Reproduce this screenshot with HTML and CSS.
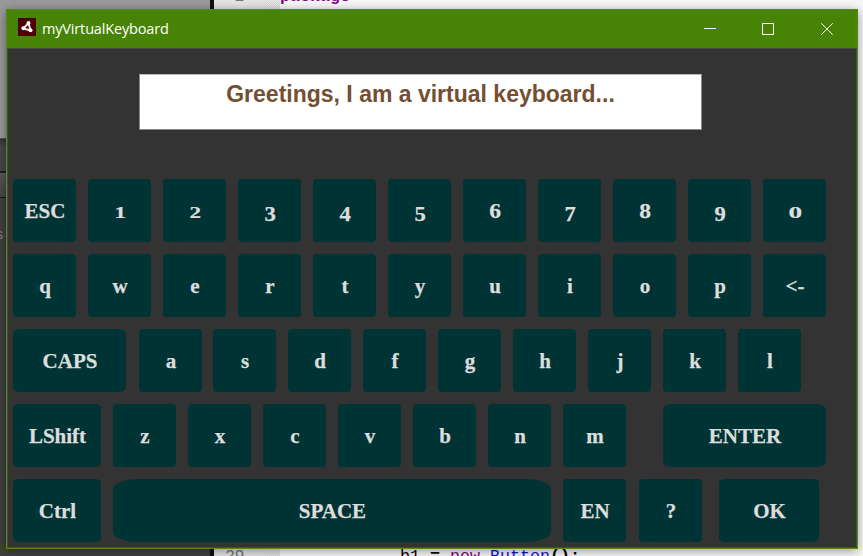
FILE: index.html
```html
<!DOCTYPE html>
<html lang="en">
<head>
<meta charset="utf-8">
<title>myVirtualKeyboard</title>
<link rel="stylesheet" href="styles.css">
</head>
<body>
<div class="desktop">
  <div class="side">
    <div class="side-stage"></div>
    <div class="side-head"></div>
    <div class="side-bar"></div>
    <div class="side-list">s</div>
  </div>
  <div class="divider"></div>
  <div class="editor">
    <div class="line"><span class="num">2</span><span class="fold"></span><code class="code-top"><b class="pkg">package</b></code></div>
    <div class="line"><span class="num">29</span><span class="fold"></span><code class="code-bottom">b1 <b>=</b> <span class="kw">new</span> <span class="type">Button</span><b>();</b></code></div>
  </div>
</div>
<main class="window">
  <header class="titlebar">
    <svg class="logo" viewBox="0 0 18 18"><path fill="#4b0003" d="M0 0h18v18H0z"/><path d="M10.5 5 5.500 10.500M10.500 5l2 7.500M5.500 10.500l7 2" fill="none" stroke="#eee3e3" stroke-width="2"/><g fill="#fff"><circle cx="10.5" cy="5" r="2"/><circle cx="5.4" cy="10.3" r="2"/><circle cx="12.5" cy="12.3" r="2"/></g></svg>
    <h1>myVirtualKeyboard</h1>
    <svg class="controls" viewBox="0 0 130 14" fill="none" stroke="#fff"><path d="M0 6.5h12"/><path d="M58.5 1.5h11v11h-11z"/><path d="m117.300 1.300 11.400 11.400m0-11.400-11.400 11.400"/></svg>
  </header>
  <section class="client">
    <div class="display">Greetings, I am a virtual keyboard...</div>
    <div class="keyboard">
      <div class="row">
        <button>ESC</button><button><span class="small one">1</span></button><button><span class="small">2</span></button><button><span class="low">3</span></button><button><span class="low">4</span></button><button><span class="low">5</span></button><button><span class="tall">6</span></button><button><span class="low">7</span></button><button><span class="tall">8</span></button><button><span class="low">9</span></button><button><span class="small zero">0</span></button>
      </div>
      <div class="row letters">
        <button>q</button><button>w</button><button>e</button><button>r</button><button>t</button><button>y</button><button>u</button><button>i</button><button>o</button><button>p</button><button class="back">&lt;-</button>
      </div>
      <div class="row letters">
        <button class="caps">CAPS</button><button class="key-a">a</button><button>s</button><button>d</button><button>f</button><button>g</button><button>h</button><button>j</button><button>k</button><button>l</button>
      </div>
      <div class="row letters">
        <button class="mod">LShift</button><button>z</button><button>x</button><button>c</button><button>v</button><button>b</button><button>n</button><button>m</button><button class="enter">ENTER</button>
      </div>
      <div class="row">
        <button class="mod">Ctrl</button><button class="space">SPACE</button><button>EN</button><button class="help">?</button><button class="ok">OK</button>
      </div>
    </div>
  </section>
</main>
</body>
</html>
```
FILE: styles.css
```css
* { box-sizing: border-box; }
body { margin: 0; width: 863px; height: 556px; overflow: hidden; }

.desktop { display: grid; grid-template-columns: 210px 4px 1fr; height: 556px; }
.side { display: grid; grid-template-rows: 139px 34px 25px 1fr; background: #414141; }
.side-stage { background: #9a9a9a; border-bottom: 1px solid #555; }
.side-head { background: linear-gradient(#333, #484848 8px); border-bottom: 2px solid #202020; }
.side-bar { background: linear-gradient(#5a5a5a, #444); border-bottom: 1px solid #171717; }
.side-list { padding-top: 28px; margin-left: -4px; font: 14px "Liberation Sans", sans-serif; color: #858585; }
.divider { background: #111; }
.editor { display: flex; flex-direction: column; justify-content: space-between; background: linear-gradient(90deg, #e4e4e4 50px, #f8f8f8 66px); }
.line { display: flex; height: 9px; font: 16.67px/20px "Liberation Mono", monospace; color: #000; white-space: pre; }
.num { width: 50px; padding-right: 20px; text-align: right; letter-spacing: -.5px; color: #777; }
.fold { width: 16px; background: repeating-conic-gradient(#d5d5d5 0 25%, #eee 0 50%) 0 0 / 2px 2px; }
.line code { font: inherit; }
.line:first-child .num, .line:first-child code { margin-top: -13px; }
.pkg { color: #808; }
.code-bottom { margin-left: 120px; }
.kw { color: #808; }
.type { color: #11d; }

.window { position: absolute; left: 6px; top: 9px; width: 852px; height: 540px; border: 1px solid #528b18; background: #333; box-shadow: 0 2px 10px rgba(0,0,0,.4); }
.titlebar { display: flex; align-items: center; height: 38px; padding: 0 23px 0 11px; background: #478305; color: #fff; }
.logo { width: 18px; height: 18px; margin-bottom: 4px; }
h1 { margin: 0 auto 0 6px; font: 400 14.5px/20px "Open Sans", "Noto Sans", sans-serif; letter-spacing: -.16px; }
.controls { width: 130px; height: 14px; }
.client { height: 500px; border: 1px solid #484848; padding: 25px 0 0 5px; }
.display { width: 563px; height: 56px; margin-left: 126px; border: 1px solid #888; border-top-color: #bbb; background: #fff; padding-top: 6px; text-align: center; font: 700 23px/26px "Liberation Sans", Arial, sans-serif; color: #754f32; }
.keyboard { display: grid; gap: 12px; margin-top: 49px; }
.row { display: flex; gap: 12px; height: 63px; }
button { flex: none; width: 63px; height: 63px; border: 0; padding: 0 0 0 1px; border-radius: 4px; background: #003333; color: #ddd; font: 700 21px/24px "Liberation Serif", serif; -webkit-text-stroke: .25px #ddd; }
button span { display: inline-block; }
.letters button { padding-top: 1px; }
.small { transform: scale(1.1, .76); transform-origin: 50% 79%; }
.zero { transform: scale(1.3, .76); }
.low { transform: translateY(3px) scaleX(1.08); }
.tall { transform: scaleX(1.12); }
.caps { width: 113px; border-radius: 7px / 5px; }
.key-a { margin: 0 -1px 0 1px; }
.mod { width: 88px; border-radius: 6px / 4px; }
.enter { width: 163px; margin-left: 25px; border-radius: 9px / 6px; }
.space { width: 438px; border-radius: 26px / 10px; }
.help { margin-left: 1px; }
.ok { width: 100px; margin-left: 5px; border-radius: 6px / 4px; }
```
